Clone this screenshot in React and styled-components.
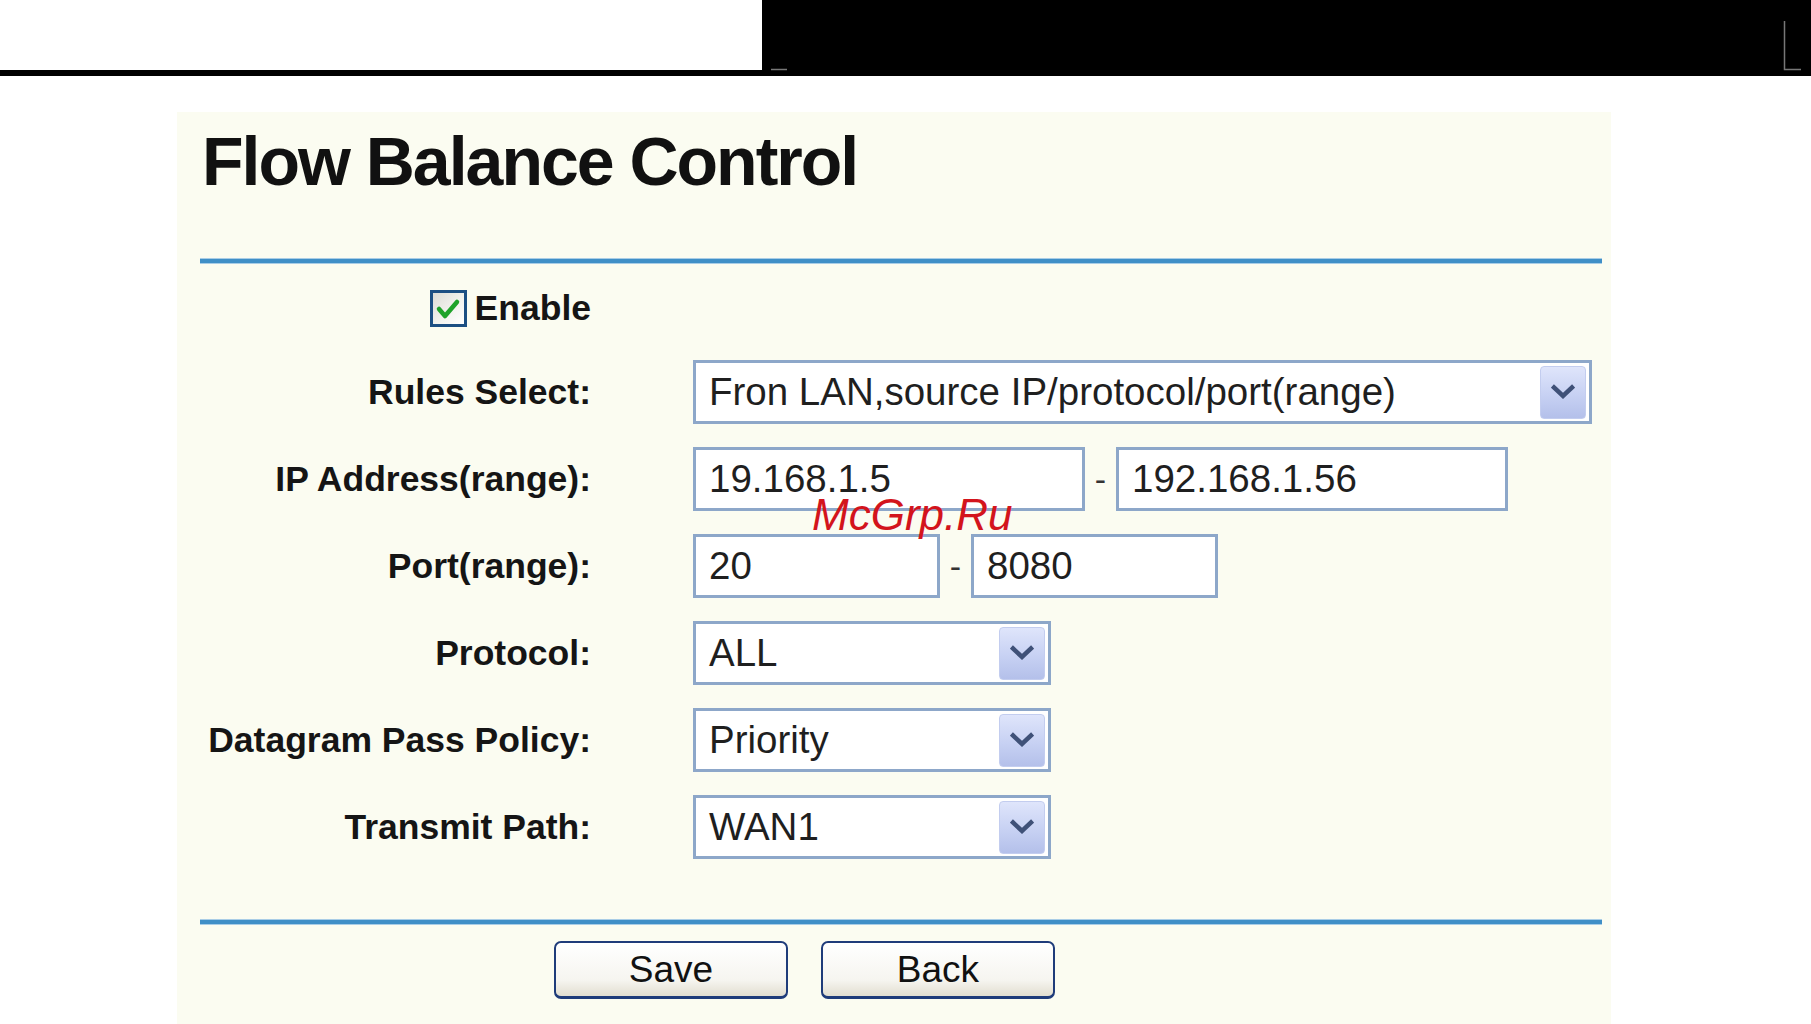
import React from 'react';
import styled, { createGlobalStyle } from 'styled-components';

const Global = createGlobalStyle`
  html, body {
    margin: 0;
    padding: 0;
    background: #ffffff;
  }
  body {
    font-family: 'Liberation Sans', Arial, sans-serif;
    width: 1811px;
    height: 1024px;
    overflow: hidden;
  }
`;

const rows = [
  { label: 'Rules Select:', kind: 'select', value: 'Fron LAN,source IP/protocol/port(range)', width: 899 },
  { label: 'IP Address(range):', kind: 'range', from: '19.168.1.5', to: '192.168.1.56', width: 392 },
  { label: 'Port(range):', kind: 'range', from: '20', to: '8080', width: 247 },
  { label: 'Protocol:', kind: 'select', value: 'ALL', width: 358 },
  { label: 'Datagram Pass Policy:', kind: 'select', value: 'Priority', width: 358 },
  { label: 'Transmit Path:', kind: 'select', value: 'WAN1', width: 358 },
];

const Chevron = () => (
  <svg width="24" height="16" viewBox="0 0 24 16">
    <path d="M3 3.5 L12 12 L21 3.5" fill="none" stroke="#3f5178" strokeWidth="4.5" strokeLinecap="square" />
  </svg>
);

const Check = () => (
  <svg width="26" height="24" viewBox="0 0 26 24">
    <path d="M4 12 L10 19 L22 5" fill="none" stroke="#1fa32a" strokeWidth="4.5" strokeLinecap="round" strokeLinejoin="round" />
  </svg>
);

const App = () => {
  return (
    <>
      <Global />
      <Header>
        <WhiteBlock />
        <BlackBlock>
          <svg width="1049" height="76" viewBox="0 0 1049 76">
            <path d="M9 69.5 H25" stroke="#777" strokeWidth="1.5" />
            <path d="M1022.5 21 V69.5 H1039" fill="none" stroke="#777" strokeWidth="1.5" />
          </svg>
        </BlackBlock>
      </Header>
      <Panel>
        <Title>Flow Balance Control</Title>
        <Rule />
        <Form>
          <EnableCell>
            <CheckBox><Check /></CheckBox>
            <span>Enable</span>
          </EnableCell>
          <span />
          {rows.map((r) => (
            <React.Fragment key={r.label}>
              <Label>{r.label}</Label>
              {r.kind === 'select' ? (
                <SelectBox $width={r.width}>
                  <span>{r.value}</span>
                  <DropButton><Chevron /></DropButton>
                </SelectBox>
              ) : (
                <RangeGroup>
                  <TextBox $width={r.width}>{r.from}</TextBox>
                  <Dash>-</Dash>
                  <TextBox $width={r.width}>{r.to}</TextBox>
                </RangeGroup>
              )}
            </React.Fragment>
          ))}
        </Form>
        <Rule $bottom />
        <ButtonRow>
          <Button>Save</Button>
          <Button>Back</Button>
        </ButtonRow>
        <Watermark>McGrp.Ru</Watermark>
      </Panel>
    </>
  );
};

export default App;

/**
 * Styled Components
 */

const Header = styled.div`
  display: flex;
  height: 76px;
  background: #000000;
`;

const WhiteBlock = styled.div`
  width: 762px;
  height: 70px;
  background: #ffffff;
`;

const BlackBlock = styled.div`
  flex: 1;
  display: flex;
`;

const Panel = styled.div`
  position: relative;
  box-sizing: border-box;
  margin: 36px 0 0 177px;
  width: 1434px;
  height: 912px;
  padding: 15px 9px 0 23px;
  background: #fbfcf1;
`;

const Title = styled.h1`
  margin: 0 0 0 2px;
  font-family: 'Liberation Sans', Arial, sans-serif;
  font-size: 68px;
  line-height: 1;
  font-weight: bold;
  letter-spacing: -2px;
  color: #111111;
`;

const Rule = styled.div`
  height: 6px;
  margin-top: ${(p) => (p.$bottom ? '60px' : '63px')};
  background: #3f8fc7;
  border-top: 1px solid #a9cde6;
  border-bottom: 1px solid #a9cde6;
  box-sizing: border-box;
`;

const Form = styled.div`
  display: grid;
  grid-template-columns: 391px 1fr;
  grid-template-rows: 43px;
  grid-auto-rows: 64px;
  column-gap: 102px;
  row-gap: 23px;
  margin-top: 30px;
`;

const Label = styled.div`
  display: flex;
  align-items: center;
  justify-content: flex-end;
  font-size: 35.5px;
  font-weight: bold;
  color: #151515;
`;

const EnableCell = styled(Label)`
  gap: 8px;
  margin-bottom: 14px;
`;

const CheckBox = styled.span`
  box-sizing: border-box;
  width: 37px;
  height: 37px;
  display: flex;
  align-items: center;
  justify-content: center;
  border: 3px solid #1c4f83;
  background: linear-gradient(135deg, #dcdcd6 0%, #f4f4f0 60%, #ffffff 100%);
`;

const field = `
  box-sizing: border-box;
  height: 64px;
  display: flex;
  align-items: center;
  padding-left: 13px;
  border: 3px solid #8da7c9;
  background: #ffffff;
  font-size: 38.5px;
  color: #1f1f1f;
  white-space: nowrap;
`;

const SelectBox = styled.div`
  ${field}
  width: ${(p) => p.$width}px;
  justify-content: space-between;
  padding-right: 3px;
`;

const DropButton = styled.span`
  box-sizing: border-box;
  width: 46px;
  height: 53px;
  display: flex;
  align-items: center;
  justify-content: center;
  border-radius: 4px;
  border: 1px solid #c3cdef;
  background: linear-gradient(180deg, #dfe5fb 0%, #c7d1f3 55%, #b4c0ea 100%);
`;

const RangeGroup = styled.div`
  display: flex;
  align-items: center;
`;

const TextBox = styled.div`
  ${field}
  width: ${(p) => p.$width}px;
`;

const Dash = styled.span`
  width: 31px;
  text-align: center;
  font-size: 34px;
  color: #333333;
`;

const ButtonRow = styled.div`
  display: flex;
  gap: 33px;
  margin-top: 16px;
  padding-left: 354px;
`;

const Button = styled.button`
  box-sizing: border-box;
  width: 234px;
  height: 58px;
  border: 2px solid #1f3c7a;
  border-bottom-width: 3px;
  border-radius: 7px;
  background: linear-gradient(180deg, #ffffff 0%, #f6f5f0 70%, #e2ded0 100%);
  font-family: 'Liberation Sans', Arial, sans-serif;
  font-size: 37px;
  color: #111111;
  padding: 0;
`;

const Watermark = styled.div`
  position: absolute;
  left: 635px;
  top: 381px;
  font-family: 'Liberation Sans', Arial, sans-serif;
  font-style: italic;
  font-size: 44px;
  line-height: 1;
  color: #d3141c;
`;
